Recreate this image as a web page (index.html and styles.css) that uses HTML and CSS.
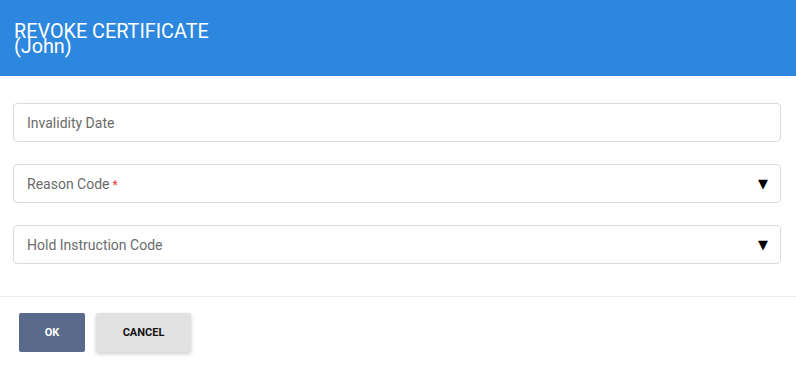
FILE: index.html
```html
<!DOCTYPE html>
<html>
<head>
<meta charset="utf-8">
<link rel="stylesheet" href="styles.css">
</head>
<body>
<div class="dialog">
  <header class="head">
    <h1 class="title">REVOKE CERTIFICATE<br>(John)</h1>
  </header>
  <div class="body">
    <div class="field"><span class="label">Invalidity Date</span></div>
    <div class="field select"><span class="label">Reason Code<span class="req">*</span></span><span class="arrow">▼</span></div>
    <div class="field select"><span class="label">Hold Instruction Code</span><span class="arrow">▼</span></div>
  </div>
  <div class="actions">
    <button class="btn ok">OK</button>
    <button class="btn cancel">CANCEL</button>
  </div>
</div>
</body>
</html>
```
FILE: styles.css
```css
html, body { margin: 0; padding: 0; background: #fff; }
body { font-family: Roboto, "Noto Sans", sans-serif; width: 796px; height: 365px; overflow: hidden; }
.dialog { display: flex; flex-direction: column; }
.head { background: #2d87de; height: 76px; box-sizing: border-box; padding: 24px 14px 0; }
.title { margin: 0; color: #fff; font-weight: 400; font-size: 19.8px; line-height: 15px; }
.body { padding: 27px 15px 32px 13px; display: flex; flex-direction: column; gap: 22px; border-bottom: 1px solid #ebebeb; }
.field { height: 39px; box-sizing: border-box; border: 1px solid #dcdcdc; border-radius: 4px; display: flex; align-items: center; justify-content: space-between; padding: 0 12px 0 13px; }
.label { font-size: 14px; color: #6b6b6b; }
.req { color: #e53935; font-size: 12px; margin-left: 3px; }
.arrow { font-size: 13px; color: #000; font-family: "DejaVu Sans", sans-serif; }
.actions { display: flex; gap: 11px; padding: 16px 19px; }
.btn { border: none; border-radius: 2px; height: 39px; font-family: Roboto, sans-serif; font-weight: 700; font-size: 11px; padding: 0; }
.ok { width: 66px; background: #596a8b; color: #fff; }
.cancel { width: 95px; background: #e2e2e2; color: #111; box-shadow: 0 2px 4px rgba(0,0,0,0.2); }
```
